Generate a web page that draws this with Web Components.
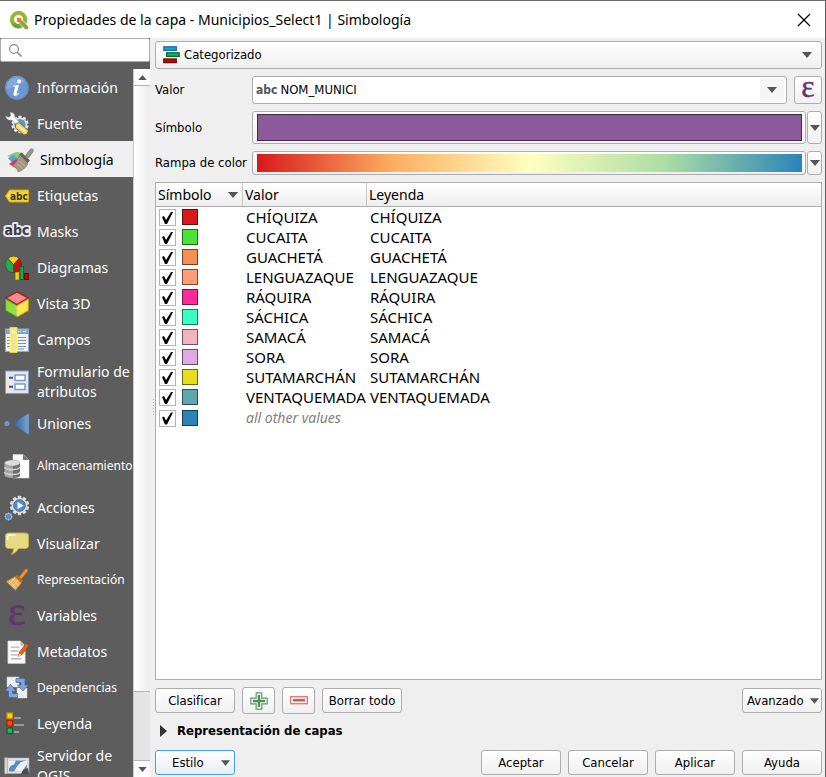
<!DOCTYPE html>
<html lang="es">
<head>
<meta charset="utf-8">
<title>Propiedades de la capa</title>
<style>
  html, body { margin: 0; height: 100%; }
  body {
    --ui: "DejaVu Sans Condensed", "DejaVu Sans", sans-serif;
    --sys: "Noto Sans", "Open Sans", sans-serif;
    --line: #adadad;
    --face: linear-gradient(#fefefe, #f0f0f0);
    font: 13px/20px var(--ui);
    color: #000;
    background: #efefef;
  }
</style>
</head>
<body>
<layer-dialog heading="Propiedades de la capa - Municipios_Select1 | Simbología">
  <side-panel slot="side">
    <side-item icon="info">Información</side-item>
    <side-item icon="source">Fuente</side-item>
    <side-item icon="brush" selected>Simbología</side-item>
    <side-item icon="label">Etiquetas</side-item>
    <side-item icon="mask">Masks</side-item>
    <side-item icon="diagram">Diagramas</side-item>
    <side-item icon="cube">Vista 3D</side-item>
    <side-item icon="fields">Campos</side-item>
    <side-item icon="form" tall>Formulario de atributos</side-item>
    <side-item icon="join">Uniones</side-item>
    <side-item icon="storage" tall small>Almacenamiento</side-item>
    <side-item icon="action">Acciones</side-item>
    <side-item icon="display">Visualizar</side-item>
    <side-item icon="render" small>Representación</side-item>
    <side-item icon="variable">Variables</side-item>
    <side-item icon="meta">Metadatos</side-item>
    <side-item icon="depend" small>Dependencias</side-item>
    <side-item icon="legend">Leyenda</side-item>
    <side-item icon="server" tall>Servidor de QGIS</side-item>
  </side-panel>
  <symbology-form></symbology-form>
  <category-table></category-table>
  <table-actions></table-actions>
  <fold-group>Representación de capas</fold-group>
  <dialog-buttons></dialog-buttons>
</layer-dialog>

<script>
const svg = (body, vb = '0 0 24 24') => `<svg viewBox="${vb}" aria-hidden="true">${body}</svg>`;
const gear = (cx, cy, r, n, w, fill) => {
  let s = `<circle cx="${cx}" cy="${cy}" r="${r}" fill="${fill}"/>`;
  for (let i = 0; i < n; i++)
    s += `<rect x="${cx - w / 2}" y="${cy - r - w * .55}" width="${w}" height="${w}" rx=".4" fill="${fill}" transform="rotate(${i * 360 / n} ${cx} ${cy})"/>`;
  return s;
};
const ICONS = {
  logo: svg(`<circle cx="11.500" cy="11.500" r="8" fill="none" stroke="#8fb935" stroke-width="5"/><path d="M3.500 18A10.500 10.500 0 0 0 15 21.400l-2-4.800a5.500 5.500 0 0 1-6-2z" fill="#6fa42c"/><path d="M12 12h4l7.500 8v3.500h-4L12 16z" fill="#8aa83c" stroke="#fff" stroke-width=".8"/><path d="M9.500 9.500h4.800v3l-1.800 1.800h-3z" fill="#ee7913"/>`),
  info: svg(`<circle cx="12" cy="12" r="11.800" fill="#6d99cf"/><path d="M1 15A11.600 11.600 0 0 1 21 4C17 8 8 9 1 15z" fill="#86abdb"/><circle cx="12" cy="12" r="11.300" fill="none" stroke="#5c88c0"/><g fill="#fff"><circle cx="14" cy="5.500" r="1.900"/><path d="M8.200 9.700l5.800-.7-2.300 8.500c-.2.900.7.600 1.900-.5l.5.500c-2.600 3.300-6.500 3.400-5.600-.2l1.500-5.700c.2-.9-.2-1.100-1.900-1.200z"/></g>`),
  source: svg(gear(15, 12.500, 7, 10, 3, '#dfe4ea') + `<circle cx="15" cy="12.500" r="5.600" fill="#6592c6"/><path d="M5 .5C8 0 10.500 2.500 9.700 5.400l4.800 4.800-2.600 2.600L7 8C4 9 1 7 .6 4.300l3.400 1L6 3.400z" fill="#fafafa" stroke="#999" stroke-width=".4"/><path d="M10.500 12.300l3.300-2 9.500 8-1 3.600-3.300 1-8.500-7z" fill="#efcf68" stroke="#6b5418" stroke-width=".7"/><path d="M12.500 13.200l8.500 7" stroke="#fff2a5" stroke-width="1.800"/>`),
  brush: svg(`<path d="M0 8l9-4 7 1-2 7z" fill="#85cf66"/><path d="M1 10l6-3 5 5-6 4z" fill="#5a9fd4"/><path d="M2 16l7-5 8 5-5 6z" fill="#cf3a63"/><path d="M12 8l9 7c-1 4-5 7-10 9 0-3-3-5-6-6 3-2 6-6 7-10z" fill="#a39782" stroke="#776b58" stroke-width=".5"/><path d="M10 16l5 4M12 13l6 5" stroke="#c1b7a5"/><path d="M12 6.500l2.500-2 8.500 8-2.500 2.500z" fill="#65625a"/><path d="M18 8l5-6.500c2-2 4.500 0 3 2.500l-5 6.500z" fill="#8f9c7d" stroke="#69705e" stroke-width=".5"/>`, '0 0 27 24'),
  label: svg(`<path d="M.5 12L4.500 6h19v12h-19z" fill="#f4d52b" stroke="#d3ac05"/><circle cx="3.500" cy="12" r="1" fill="#fff9cb"/><text x="5" y="15.500" font-family="DejaVu Sans Condensed" font-size="10" font-weight="bold" fill="#333">abc</text>`),
  mask: svg(`<text x="-.5" y="15" font-family="DejaVu Sans Condensed" font-size="14" font-weight="bold" fill="#3c3c3c" stroke="#e7e9fb" stroke-width="4" stroke-linejoin="round" paint-order="stroke">abc</text>`),
  diagram: svg(`<g stroke="#3b3020" stroke-width=".5"><path d="M8.500 8.500L3 2.500A8 8 0 0 1 14 2.500z" fill="#fbd313"/><path d="M8.500 8.500L14 2.500a8 8 0 0 1-5 14z" fill="#c4110c"/><path d="M8.500 8.500v8A8 8 0 0 1 3 2.500z" fill="#22a95a"/></g><path d="M10.500 16.500h3.500v7h-3.500z" fill="#fccc1c" stroke="#d49a0a"/><path d="M15 10.500h3.500v13H15z" fill="#12aa5a" stroke="#06662f"/><path d="M19.500 17.500h4v6h-4z" fill="#b00d08" stroke="#6e0704"/>`),
  cube: svg(`<path d="M12 0l11 6-11 6.500L1 6z" fill="#f58d8d" stroke="#b3161a" stroke-width="1.300"/><path d="M.7 7l11.300 6.500V25L.7 18.500z" fill="#8be03a" stroke="#4d9b1c"/><path d="M23.300 7L12 13.500V25l11.300-6.500z" fill="#fbe653" stroke="#c9a21a"/><path d="M12 14v9.500" stroke="#eef7a0"/>`),
  fields: svg(`<rect x=".5" y="1" width="23" height="22.500" fill="#f1f2f4" stroke="#8fa9c9"/><path d="M1 1.500h22V6H1z" fill="#7ba3d2"/><g stroke="#7195c3" stroke-width="1.200"><path d="M2 9.500h3M2 12.500h3M2 15.500h3M2 18.500h3M13 9.500h8M13 12.500h8M13 15.500h8M13 18.500h8M13 21h6"/></g><path d="M13 3.500h3M18 3.500h3" stroke="#fff"/><rect x="5.500" y="0" width="6" height="24" fill="#ebe2a1" stroke="#fff25d" stroke-width="1.600"/><circle cx="8.500" cy="4" r="1.300" fill="#fff"/>`),
  form: svg(`<rect x=".5" y="1" width="23" height="22.500" fill="#e4e7ec" stroke="#7b9dc6"/><rect x="10" y="5" width="10" height="5.500" fill="#fff" stroke="#6f96c5" stroke-width="1.400"/><rect x="10" y="14" width="10" height="5.500" fill="#fff" stroke="#6f96c5" stroke-width="1.400"/><path d="M4 7.800h4M4 16.800h4" stroke="#44566e" stroke-width="2"/>`),
  join: svg(`<defs><linearGradient id="j"><stop stop-color="#2b5d97"/><stop offset="1" stop-color="#7ba4d2"/></linearGradient></defs><path d="M7 11.500L24 1v22z" fill="url(#j)" stroke="#3c6aa0" stroke-width=".5"/><circle cx="2" cy="11.500" r="2.600" fill="#6d97c9"/>`),
  storage: svg(`<path d="M8 .5h10L24 6v18H8z" fill="#fff" stroke="#ddd" stroke-width=".5"/><path d="M18 .5L24 6h-6z" fill="#777"/><path d="M-.5 9v12c0 4 15.500 4 15.500 0V9z" fill="#a7a7a7"/><path d="M8 12v12c3-.3 7-1 7-2.500V9z" fill="#6e6e6e"/><ellipse cx="7.200" cy="9" rx="7.700" ry="3" fill="#dedede" stroke="#888" stroke-width=".5"/><path d="M-.5 13c1 3.500 14.500 3.500 15.500 0M-.5 18c1 3.500 14.500 3.500 15.500 0" fill="none" stroke="#dadada" stroke-width="1.200"/>`),
  action: svg(gear(14.500, 9.500, 7.800, 10, 3.400, '#dcdde0') + `<circle cx="14.500" cy="9.500" r="5.800" fill="#5b8bc4" stroke="#3c689f"/><path d="M12.500 6l6 3.500-6 3.500z" fill="#fff"/>` + gear(3.500, 20.500, 3.200, 8, 1.500, '#b8c4d3') + `<circle cx="3.500" cy="20.500" r="2.600" fill="#5b8bc4"/>`),
  display: svg(`<path d="M4 1h16c2.500 0 3.500 1 3.500 3v9c0 2.500-1 3.500-3.500 3.500h-6.500C12 19 10 21 6.500 22.500c1.500-2 2-4 1.800-6H4c-2.500 0-3.500-1-3.500-3.500V4c0-2 1-3 3.500-3z" fill="#e8d983" stroke="#c2ae4c"/><path d="M2.500 8V5c0-1.500.8-2 2-2h6" fill="none" stroke="#fffbe0" stroke-width="1.600"/>`),
  render: svg(`<path d="M14 9l6-7.500c1.500-2 4 0 2.500 2L16.500 11z" fill="#ea9a2c" stroke="#a2620e" stroke-width=".6"/><path d="M10 8.500l2-1.500 6 5.500-1.500 2.500z" fill="#b8701a"/><path d="M10 8.500l6.500 6.500-6 7.500L1 13.500z" fill="#e7b263" stroke="#ab6f1f" stroke-width=".6"/><path d="M4 13l7 7M7 11l7 7M4 16l6-6M7 19l6-7" stroke="#f7d89c" stroke-width=".8"/>`),
  variable: svg(`<text x="3" y="21" font-family="Liberation Serif" font-size="42" fill="#60366f" stroke="#60366f" stroke-width=".6">ε</text>`),
  epsilon: svg(`<text x="3" y="21" font-family="Liberation Serif" font-size="42" fill="#60366f" stroke="#60366f" stroke-width=".6">ε</text>`),
  meta: svg(`<path d="M3 .5h13l5 5V24H3z" fill="#fbfbfb" stroke="#ccc" stroke-width=".6"/><path d="M16 .5l5 5h-5z" fill="#bbb"/><path d="M6 7h9M6 11h8M6 15h9M6 19h11" stroke="#b5b5b5" stroke-width="1.400"/><path d="M14 16.500l1-4.500 7-9 3 2-7 9.500z" fill="#e2651c" stroke="#a53c0b" stroke-width=".6"/><path d="M14 16.500l.8-3 2.500 1.500z" fill="#f3d6a7"/>`, '0 0 25 24'),
  depend: svg(`<path d="M2 1h12v10H2zM12 12h10v10H12z" fill="#eeeff1" stroke="#ccc" stroke-width=".5"/><g fill="#7fa7dc" stroke="#45699b" stroke-width=".7"><path d="M11 2.500h9V9h3.500L18 15l-5.500-6H16V6.500h-5z"/><path d="M12.500 21.500H3.500V15H0l5.500-6.500L11 15H7.500v2.500h5z"/></g>`),
  legend: svg(`<rect x="2" y="0" width="5.500" height="5.500" fill="#ffd800" stroke="#c99109" stroke-width="1.200"/><rect x="2" y="7.500" width="5.500" height="5.500" fill="#fb4a12" stroke="#a82204" stroke-width="1.200"/><rect x="2" y="15" width="5.500" height="5.500" fill="#1cba5c" stroke="#08602b" stroke-width="1.200"/><path d="M9 5h7M9 12h10M9 19h5" stroke="#999" stroke-width="2"/>`, '0 -1 24 24'),
  server: svg(`<path d="M2 4h22v15.500H2z" fill="#e3e3e1" stroke="#aaa" stroke-width=".6"/><path d="M4 6.500h18v11H4z" fill="#5a8cc0"/><path d="M4 6.500h7l-2 4-3 1-2 3zM13 11l3-3 6-1.500v4l-5 7H9z" fill="#eef1f3"/><path d="M16 20l2-4 5-2 1 6z" fill="#4a4a4a"/><rect x="-.5" y="3.500" width="3" height="16.500" rx="1" fill="#d5d5d3" stroke="#999" stroke-width=".5"/>`),
  categories: svg(`<rect x=".8" y=".8" width="12.500" height="3.600" fill="#18a7b5" stroke="#2563c9" stroke-width="1.300"/><rect x="3.700" y="6.800" width="12.500" height="3.600" fill="#13b35f" stroke="#0a6b34" stroke-width="1.300"/><rect x=".8" y="13" width="12.500" height="3.600" fill="#b50f05" stroke="#750a04" stroke-width="1.300"/>`, '0 0 18 18'),
  plus: svg(`<path d="M6.200.8h5.600v5.400h5.400v5.600h-5.400v5.400H6.200v-5.400H.8V6.200h5.400z" fill="#fff" stroke="#5c9a5f" stroke-width="1.200"/><path d="M9 3v12M3 9h12" stroke="#4f8f54" stroke-width="2.400"/>`, '0 0 18 18'),
  minus: svg(`<rect x=".7" y="4.700" width="16.600" height="7" fill="#fff" stroke="#f06c6c" stroke-width="1.300"/><path d="M3 8.200h12" stroke="#ee4c4c" stroke-width="2.600"/>`, '0 0 18 18'),
  down: svg(`<path d="M0 0h10L5 6z" fill="#555"/>`, '0 0 10 6'),
  up: svg(`<path d="M0 6h10L5 0z" fill="#555"/>`, '0 0 10 6'),
  right: svg(`<path d="M1 0v12l7-6z" fill="#333"/>`, '0 0 9 12'),
  close: svg(`<path d="M1 1l12 12M13 1L1 13" stroke="#000" stroke-width="1.200"/>`, '0 0 14 14'),
  search: svg(`<circle cx="5" cy="5" r="4.400" fill="none" stroke="#888" stroke-width="1.100"/><path d="M8 8l4.500 4.500" stroke="#888" stroke-width="1.600"/>`, '0 0 13 13'),
};

const BASE = `
  *, *::before { box-sizing: border-box; }
  button, input, select { font: inherit; color: inherit; margin: 0; padding: 0; border: 0; background: none; }
  .face {
    display: flex; align-items: center; justify-content: center;
    border: 1px solid var(--line); border-radius: 3px; background: var(--face);
  }
`;

function define(name, css, html) {
  const tpl = document.createElement('template');
  customElements.define(name, class extends HTMLElement {
    connectedCallback() {
      if (this.shadowRoot) return;
      tpl.innerHTML = `<style>${BASE}${css}</style>${typeof html === 'function' ? html(this) : html}`;
      this.attachShadow({ mode: 'open' }).append(tpl.content.cloneNode(true));
    }
  });
}

define('ui-icon', `
  :host { display: block; flex: none; width: 24px; height: 24px; }
  svg { display: block; width: 100%; height: 100%; overflow: visible; }
`, el => ICONS[el.getAttribute('name')]);

define('push-button', `
  :host { display: block; width: 80px; height: 25px; }
  button { width: 100%; height: 100%; gap: 6px; white-space: nowrap; }
  :host([menu]) button { justify-content: space-between; padding: 0 4px; }
  :host([focused]) button { border-color: #3fa2ee; background: linear-gradient(#fefefe, #e6eef4); }
  :host([focused][menu]) button { padding-left: 16px; }
  ui-icon { width: 9px; height: 6px; }
`, el => `<button class="face" type="button"><slot></slot>${el.hasAttribute('menu') ? '<ui-icon name="down"></ui-icon>' : ''}</button>`);

define('side-item', `
  :host { display: block; }
  button {
    display: flex; align-items: center; gap: 8px; width: 100%; min-height: 36px; padding: 1px 0 0 5px;
    color: #fff; font: 14px/20px var(--sys); text-align: left;
  }
  :host([tall]) button { min-height: 48px; }
  :host([small]) button { font-size: 12px; padding-top: 2px; }
  :host([selected]) button { background: #efefef; color: #000; gap: 6px; padding-left: 7px; }
  :host([selected]) ui-icon { width: 27px; }
`, el => `<button type="button"${el.hasAttribute('selected') ? ' aria-current="page"' : ''}>
  <ui-icon name="${el.getAttribute('icon')}"></ui-icon><span><slot></slot></span></button>`);

define('scroll-bar', `
  :host { display: flex; flex-direction: column; width: 17px; background: #e4e4e4; border-left: 1px solid #c8c8c8; }
  button { display: grid; place-items: center; height: 16px; background: #fcfcfc; flex: none; }
  ui-icon { width: 9px; height: 5px; }
  .thumb { flex: 608; border: solid #b5b5b5; border-width: 1px 0; background: linear-gradient(90deg, #fff, #ececec); }
  .rest { flex: 68; border-bottom: 1px solid #b5b5b5; }
`, `<button type="button" aria-label="Subir"><ui-icon name="up"></ui-icon></button>
  <div class="thumb"></div><div class="rest"></div>
  <button type="button" aria-label="Bajar"><ui-icon name="down"></ui-icon></button>`);

define('side-panel', `
  :host { display: flex; flex-direction: column; min-height: 0; width: 150px; flex: none; background: #5d5d5d; }
  .search {
    display: flex; align-items: center; gap: 6px; height: 24px; flex: none; padding: 0 8px;
    background: #fff; border: 1px solid #adadad; border-radius: 2px;
  }
  .search ui-icon { width: 13px; height: 13px; }
  input { min-width: 0; flex: 1; outline: 0; }
  .body { display: flex; flex: 1; min-height: 0; padding-top: 7px; }
  nav { flex: 1; min-width: 0; overflow: hidden; }
`, `<label class="search"><ui-icon name="search"></ui-icon><input type="text" aria-label="Buscar"></label>
  <div class="body"><nav><slot></slot></nav><scroll-bar></scroll-bar></div>`);

define('symbology-form', `
  :host { display: flex; flex-direction: column; gap: 7px; }
  .renderer { display: grid; height: 28px; align-items: center; }
  .renderer > * { grid-area: 1 / 1; pointer-events: none; }
  .renderer select { appearance: none; width: 100%; height: 28px; padding: 0 28px; pointer-events: auto;
    border: 1px solid var(--line); border-radius: 3px; background: var(--face); }
  .renderer .kind { width: 18px; height: 18px; margin-left: 8px; }
  .renderer .arrow { justify-self: end; margin-right: 10px; }
  .arrow { width: 10px; height: 6px; }
  form { display: grid; grid-template-columns: 97px minmax(0, 1fr); row-gap: 7px; align-items: center; margin: 0; }
  .line { display: flex; height: 28px; gap: 1px; }
  .line.value { gap: 7px; }
  .combo { display: flex; align-items: center; flex: 1; min-width: 0; padding: 1px 2px 1px 3px; gap: 3px;
    border: 1px solid var(--line); border-radius: 3px; background: #fff; }
  .combo b { font-size: 12px; color: #555; }
  .combo input { flex: 1; min-width: 0; outline: 0; }
  .combo button { display: grid; place-items: center; width: 24px; height: 100%; background: #f5f5f5; }
  .eps { width: 28px; }
  .eps ui-icon { width: 18px; height: 18px; }
  .symbol { height: 33px; }
  .ramp { height: 24px; }
  .wide { flex: 1; padding: 2px 3px 2px 4px; }
  .wide span { flex: 1; height: 100%; }
  .symbol span { background: #8b5a99; border: 1px solid #432b4a; }
  .ramp span { background: linear-gradient(90deg, #d7191c, #fdae61 25%, #ffffbf 50%, #abdda4 75%, #2b83ba); }
  .drop { width: 15px; }
`, `<div class="renderer">
    <select aria-label="Tipo de simbología"><option>Categorizado</option></select>
    <ui-icon class="kind" name="categories"></ui-icon><ui-icon class="arrow" name="down"></ui-icon>
  </div>
  <form>
    <label for="value">Valor</label>
    <div class="line value">
      <div class="combo"><b>abc</b><input id="value" type="text" value="NOM_MUNICI">
        <button type="button" aria-label="Elegir campo"><ui-icon class="arrow" name="down"></ui-icon></button></div>
      <button class="face eps" type="button" aria-label="Expresión"><ui-icon name="epsilon"></ui-icon></button>
    </div>
    <label for="symbol">Símbolo</label>
    <div class="line symbol">
      <button class="face wide" id="symbol" type="button"><span></span></button>
      <button class="face drop" type="button" aria-label="Opciones de símbolo"><ui-icon class="arrow" name="down"></ui-icon></button>
    </div>
    <label for="ramp">Rampa de color</label>
    <div class="line ramp">
      <button class="face wide" id="ramp" type="button"><span></span></button>
      <button class="face drop" type="button" aria-label="Opciones de rampa"><ui-icon class="arrow" name="down"></ui-icon></button>
    </div>
  </form>`);

const CATEGORIES = [
  ['CHÍQUIZA', '#d7191c'], ['CUCAITA', '#4be336'], ['GUACHETÁ', '#f59053'], ['LENGUAZAQUE', '#ff9e74'],
  ['RÁQUIRA', '#ff2b96'], ['SÁCHICA', '#38ffc0'], ['SAMACÁ', '#f3b3bf'], ['SORA', '#e0a8e4'],
  ['SUTAMARCHÁN', '#e8dd1b'], ['VENTAQUEMADA', '#5ea7ae'], ['', '#2b83ba'],
];
define('category-table', `
  :host { display: block; flex: 1; min-height: 0; overflow: hidden; background: #fff; border: 1px solid var(--line); }
  table { width: 100%; table-layout: fixed; border-collapse: separate; border-spacing: 0; font: 15px/20px var(--sys); }
  th, td { padding: 0; text-align: left; font-weight: normal; white-space: nowrap; }
  th { height: 24px; padding-left: 2px; font-size: 14px; background: linear-gradient(#fff, #ededed); border-bottom: 1px solid var(--line); }
  th + th { border-left: 1px solid #c8c8c8; }
  th:nth-child(1) { width: 86px; }
  th:nth-child(2) { width: 124px; }
  th div { display: flex; align-items: center; justify-content: space-between; padding-right: 4px; }
  th ui-icon { width: 10px; height: 6px; }
  td { height: 20px; padding-left: 4px; }
  td:first-child { padding-left: 3px; }
  .mark { display: flex; gap: 6px; height: 20px; padding-top: 2px; }
  input { appearance: none; width: 17px; height: 17px; border: 1px solid #b4b4b4; background: #fff; }
  input:checked::before { content: ""; display: block; width: 15px; height: 15px; background: #000;
    clip-path: polygon(2px 7px, 4px 6px, 6px 10px, 11px 2px, 13px 2px, 7px 14px, 5px 14px); }
  .chip { width: 16px; height: 16px; border: 1px solid #0008; }
  em { color: #808080; font-size: 14px; }
`, () => `<table><thead><tr><th><div>Símbolo<ui-icon name="down"></ui-icon></div></th><th>Valor</th><th>Leyenda</th></tr></thead>
  <tbody>${CATEGORIES.map(([name, color]) => `<tr>
    <td><div class="mark"><input type="checkbox" checked aria-label="${name || 'all other values'}"><span class="chip" style="background-color:${color}"></span></div></td>
    <td>${name || '<em>all other values</em>'}</td><td>${name}</td></tr>`).join('')}</tbody></table>`);

define('table-actions', `
  :host { display: flex; align-items: center; gap: 7px; height: 27px; flex: none; }
  .tool { width: 33px; height: 27px; }
  .tool ui-icon { width: 18px; height: 18px; }
  .end { margin-left: auto; }
`, `<push-button>Clasificar</push-button>
  <button class="face tool" type="button" aria-label="Añadir"><ui-icon name="plus"></ui-icon></button>
  <button class="face tool" type="button" aria-label="Quitar"><ui-icon name="minus"></ui-icon></button>
  <push-button>Borrar todo</push-button>
  <push-button class="end" menu>Avanzado</push-button>`);

define('fold-group', `
  :host { display: block; flex: none; height: 22px; }
  summary { display: flex; align-items: center; gap: 9px; padding-left: 4px; font-weight: bold; list-style: none; }
  ui-icon { width: 9px; height: 12px; }
`, `<details><summary><ui-icon name="right"></ui-icon><span><slot></slot></span></summary></details>`);

define('dialog-buttons', `
  :host { display: flex; gap: 7px; flex: none; }
  .menu { margin-right: auto; }
`, `<push-button class="menu" menu focused>Estilo</push-button>
  <push-button>Aceptar</push-button><push-button>Cancelar</push-button>
  <push-button>Aplicar</push-button><push-button>Ayuda</push-button>`);

define('layer-dialog', `
  :host { display: flex; flex-direction: column; height: 100vh; box-sizing: border-box; overflow: hidden;
    border-top: 1px solid #6b6b6b; border-right: 1px solid #66585c; }
  header { display: flex; align-items: center; gap: 5px; height: 37px; flex: none; padding: 0 14px 0 9px;
    background: #fff; font: 14px/20px var(--sys); }
  h1 { flex: 1; margin: 0; font: inherit; }
  header > ui-icon { width: 20px; height: 20px; }
  header button ui-icon { width: 14px; height: 14px; }
  .body { display: flex; flex: 1; min-height: 0; }
  .grip { align-self: center; flex: none; width: 5px; height: 17px; padding-left: 3px; }
  .grip::before { content: ""; display: block; width: 1px; height: 17px;
    background: repeating-linear-gradient(#aaa 0 1px, transparent 1px 3px); }
  main { display: flex; flex-direction: column; flex: 1; min-width: 0; gap: 7px; padding: 3px 3px 2px 0; }
`, el => `<header><ui-icon name="logo"></ui-icon><h1>${el.getAttribute('heading')}</h1>
    <button type="button" aria-label="Cerrar"><ui-icon name="close"></ui-icon></button></header>
  <div class="body"><slot name="side"></slot><div class="grip"></div><main><slot></slot></main></div>`);
</script>
</body>
</html>
